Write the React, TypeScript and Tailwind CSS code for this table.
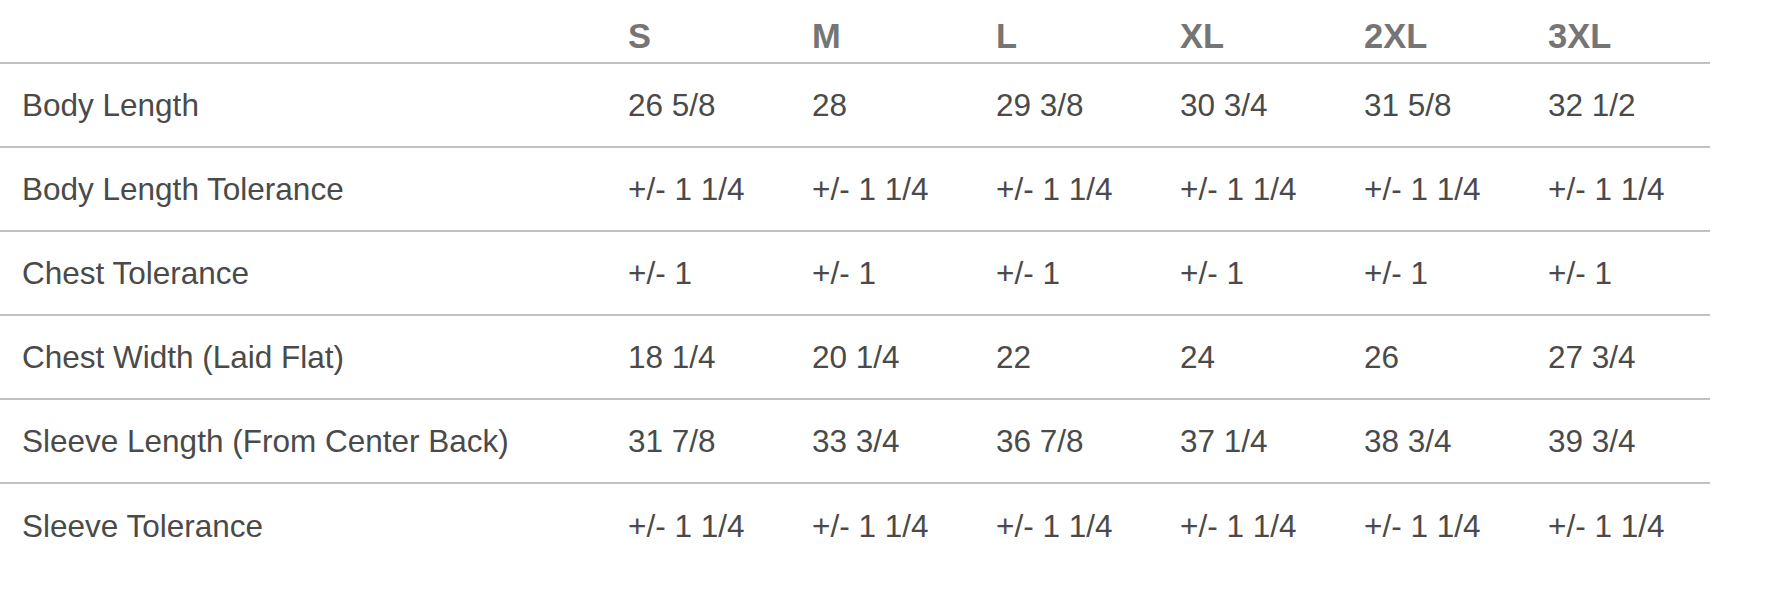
import React from 'react';

interface SizeRow {
  label: string;
  values: string[];
}

const sizes = ['S', 'M', 'L', 'XL', '2XL', '3XL'];

const rows: SizeRow[] = [
  { label: 'Body Length', values: ['26 5/8', '28', '29 3/8', '30 3/4', '31 5/8', '32 1/2'] },
  { label: 'Body Length Tolerance', values: ['+/- 1 1/4', '+/- 1 1/4', '+/- 1 1/4', '+/- 1 1/4', '+/- 1 1/4', '+/- 1 1/4'] },
  { label: 'Chest Tolerance', values: ['+/- 1', '+/- 1', '+/- 1', '+/- 1', '+/- 1', '+/- 1'] },
  { label: 'Chest Width (Laid Flat)', values: ['18 1/4', '20 1/4', '22', '24', '26', '27 3/4'] },
  { label: 'Sleeve Length (From Center Back)', values: ['31 7/8', '33 3/4', '36 7/8', '37 1/4', '38 3/4', '39 3/4'] },
  { label: 'Sleeve Tolerance', values: ['+/- 1 1/4', '+/- 1 1/4', '+/- 1 1/4', '+/- 1 1/4', '+/- 1 1/4', '+/- 1 1/4'] },
];

export default function App() {
  return (
    <div className="min-h-[601px] w-full bg-white" style={{ fontFamily: '"Liberation Sans", Arial, sans-serif' }}>
      <table className="w-[1710px] table-fixed border-collapse">
        <colgroup>
          <col className="w-[606px]" />
          {sizes.map(s => (
            <col key={s} />
          ))}
        </colgroup>
        <thead>
          <tr className="border-b-2 border-[#c0c0c0]">
            <th className="h-[63px]" />
            {sizes.map(s => (
              <th
                key={s}
                className="h-[63px] pl-[22px] pb-[6px] text-left align-bottom text-[34.5px] leading-[40px] font-bold text-[#757575]"
              >
                {s}
              </th>
            ))}
          </tr>
        </thead>
        <tbody>
          {rows.map((r, i) => (
            <tr key={r.label} className={i < rows.length - 1 ? 'border-b-2 border-[#c0c0c0]' : ''}>
              <td className="h-[84px] pl-[22px] align-middle text-[31.5px] leading-[36px] text-[#4a4a4a] whitespace-nowrap">
                {r.label}
              </td>
              {r.values.map((v, j) => (
                <td
                  key={j}
                  className="h-[84px] pl-[22px] align-middle text-[31.5px] leading-[36px] text-[#4a4a4a] whitespace-nowrap"
                >
                  {v}
                </td>
              ))}
            </tr>
          ))}
        </tbody>
      </table>
    </div>
  );
}
